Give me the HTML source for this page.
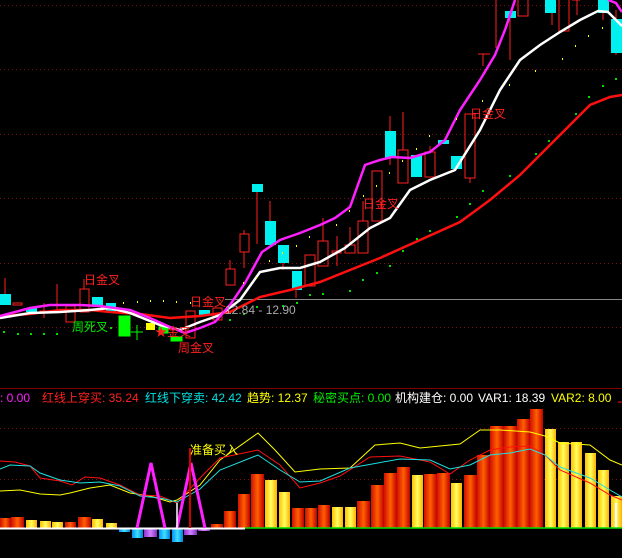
<!DOCTYPE html>
<html><head><meta charset="utf-8"><style>
html,body{margin:0;padding:0;background:#000;width:622px;height:558px;overflow:hidden}
svg{display:block}
text{font-family:"Liberation Sans","Noto Sans CJK SC",sans-serif}
</style></head><body>
<svg width="622" height="558" viewBox="0 0 622 558" xmlns="http://www.w3.org/2000/svg">
<defs>
<linearGradient id="gr" x1="0" x2="1"><stop offset="0" stop-color="#d01000"/><stop offset="0.5" stop-color="#ff6000"/><stop offset="1" stop-color="#c00000"/></linearGradient>
<linearGradient id="gy" x1="0" x2="1"><stop offset="0" stop-color="#ffc000"/><stop offset="0.5" stop-color="#ffff60"/><stop offset="1" stop-color="#ffb000"/></linearGradient>
<linearGradient id="gc" x1="0" x2="1"><stop offset="0" stop-color="#0090ff"/><stop offset="0.5" stop-color="#40e0ff"/><stop offset="1" stop-color="#0080e0"/></linearGradient>
<linearGradient id="gp" x1="0" x2="1"><stop offset="0" stop-color="#9030d0"/><stop offset="0.5" stop-color="#d080ff"/><stop offset="1" stop-color="#8030c0"/></linearGradient>
</defs>
<g stroke="#7a1010" stroke-dasharray="1,3" stroke-width="1">
<line x1="0" y1="5.5" x2="622" y2="5.5"/><line x1="0" y1="69.5" x2="622" y2="69.5"/><line x1="0" y1="134.5" x2="622" y2="134.5"/><line x1="0" y1="198.5" x2="622" y2="198.5"/><line x1="0" y1="263.5" x2="622" y2="263.5"/><line x1="0" y1="327.5" x2="622" y2="327.5"/>
<line x1="0" y1="428.5" x2="622" y2="428.5"/><line x1="0" y1="479.5" x2="622" y2="479.5"/>
</g>
<line x1="225" y1="299.5" x2="622" y2="299.5" stroke="#888"/>
<line x1="0" y1="388.5" x2="622" y2="388.5" stroke="#800000"/>
<!-- candles -->
<g stroke="#ff2020" stroke-width="1" fill="none">
<line x1="5" y1="278" x2="5" y2="294"/>
<rect x="13" y="303" width="9" height="2"/><line x1="44" y1="303" x2="44" y2="318"/><rect x="40" y="311" width="8" height="2"/>
<line x1="57" y1="284" x2="57" y2="310"/>
<rect x="66" y="306" width="9" height="16"/><rect x="80" y="289" width="9" height="23"/><line x1="84" y1="279" x2="84" y2="289"/>
<rect x="186" y="311" width="9" height="27"/><rect x="213" y="308" width="9" height="12"/>
<rect x="226" y="269" width="9" height="16"/><line x1="230" y1="260" x2="230" y2="269"/>
<rect x="240" y="234" width="9" height="18"/><line x1="244" y1="230" x2="244" y2="234"/><line x1="244" y1="252" x2="244" y2="268"/>
<line x1="257" y1="192" x2="257" y2="244"/><line x1="270" y1="201" x2="270" y2="221"/>
<rect x="305" y="255" width="10" height="31"/>
<rect x="318" y="241" width="10" height="25"/><line x1="323" y1="218" x2="323" y2="241"/>
<rect x="332" y="251" width="9" height="2"/><line x1="337" y1="236" x2="337" y2="266"/>
<rect x="345" y="245" width="10" height="8"/><line x1="350" y1="227" x2="350" y2="245"/>
<rect x="358" y="221" width="10" height="32"/><line x1="363" y1="201" x2="363" y2="221"/>
<rect x="372" y="171" width="10" height="50"/>
<rect x="398" y="150" width="10" height="33"/><line x1="403" y1="112" x2="403" y2="150"/>
<rect x="425" y="152" width="10" height="25"/><line x1="430" y1="146" x2="430" y2="152"/>
<rect x="465" y="114" width="10" height="64"/><line x1="470" y1="178" x2="470" y2="183"/>
<line x1="478" y1="54" x2="490" y2="54"/><line x1="483" y1="54" x2="483" y2="66"/>
<line x1="496" y1="0" x2="496" y2="48"/><line x1="510" y1="18" x2="510" y2="60"/>
<rect x="518" y="-1" width="10" height="17"/><rect x="559" y="-1" width="10" height="32"/><line x1="572" y1="0" x2="580" y2="0"/><line x1="577" y1="0" x2="577" y2="15"/>
<line x1="552" y1="13" x2="552" y2="25"/><line x1="603" y1="13" x2="603" y2="20"/><line x1="616" y1="10" x2="616" y2="19"/><line x1="616" y1="53" x2="616" y2="55"/>
<line x1="390" y1="116" x2="390" y2="131"/><line x1="390" y1="158" x2="390" y2="165"/>
<line x1="296" y1="290" x2="296" y2="298"/><line x1="283" y1="263" x2="283" y2="270"/>
</g>
<g fill="#00f0f0">
<rect x="0" y="294" width="11" height="11"/><rect x="26" y="308" width="11" height="4"/><rect x="92" y="297" width="11" height="8"/><rect x="106" y="303" width="10" height="9"/><rect x="199" y="310" width="11" height="6"/>
<rect x="252" y="184" width="11" height="8"/><rect x="265" y="221" width="11" height="24"/><rect x="278" y="245" width="11" height="18"/><rect x="292" y="271" width="10" height="19"/>
<rect x="385" y="131" width="11" height="27"/><rect x="411" y="155" width="11" height="22"/><rect x="438" y="140" width="11" height="4"/><rect x="451" y="156" width="11" height="13"/>
<rect x="505" y="11" width="11" height="7"/><rect x="545" y="0" width="11" height="13"/><rect x="598" y="0" width="11" height="13"/><rect x="611" y="19" width="11" height="34"/>
</g>
<g fill="#00ff00" stroke="#00ff00"><rect x="119" y="316" width="11" height="20"/><line x1="131" y1="332" x2="143" y2="332" fill="none"/><line x1="137" y1="325" x2="137" y2="340" fill="none"/><rect x="171" y="337" width="11" height="4"/><rect x="159" y="327" width="9" height="6"/></g>
<rect x="146" y="323" width="9" height="7" fill="#ffff00"/>
<!-- MA lines -->
<polyline fill="none" stroke="#ff1010" stroke-width="2.5" points="0,316 30,314 60,310 90,310 110,312 140,314 170,318 200,316 230,312 260,297 290,290 320,282 350,270 380,258 420,240 460,222 490,200 520,175 545,150 570,125 590,105 610,97 622,95"/>
<polyline fill="none" stroke="#ffffff" stroke-width="2.5" points="0,318 30,313 60,312 90,310 110,308 130,313 160,325 180,330 200,322 220,315 240,300 260,272 280,268 300,268 320,262 345,248 370,228 390,218 410,190 430,180 455,170 480,130 500,90 520,60 540,45 560,32 580,20 598,11 608,12 622,26"/>
<polyline fill="none" stroke="#ff20ff" stroke-width="2.5" points="0,316 30,308 50,305 80,305 100,306 130,310 150,318 170,327 185,333 200,328 215,322 230,305 245,283 262,252 280,240 300,233 320,225 335,218 350,207 365,165 380,160 392,157 410,158 430,152 445,140 460,110 480,80 495,55 505,30 515,0"/>
<polyline fill="none" stroke="#ff20ff" stroke-width="2.5" points="608,0 616,3 622,12"/>
<!-- dots -->
<g fill="#ffff00"><rect x="123" y="302" width="1" height="2"/><rect x="137" y="301" width="1" height="2"/><rect x="150" y="300" width="1" height="2"/><rect x="163" y="300" width="1" height="2"/><rect x="176" y="301" width="1" height="2"/><rect x="190" y="302" width="1" height="2"/><rect x="243" y="282" width="1" height="2"/><rect x="256" y="277" width="1" height="2"/><rect x="269" y="260" width="1" height="2"/><rect x="282" y="252" width="1" height="2"/><rect x="296" y="245" width="1" height="2"/><rect x="309" y="236" width="1" height="2"/><rect x="336" y="224" width="1" height="2"/><rect x="349" y="210" width="1" height="2"/><rect x="363" y="195" width="1" height="2"/><rect x="376" y="185" width="1" height="2"/><rect x="389" y="172" width="1" height="2"/><rect x="402" y="160" width="1" height="2"/><rect x="416" y="148" width="1" height="2"/><rect x="429" y="135" width="1" height="2"/><rect x="456" y="118" width="1" height="2"/><rect x="482" y="100" width="1" height="2"/><rect x="509" y="84" width="1" height="2"/><rect x="535" y="70" width="1" height="2"/><rect x="562" y="58" width="1" height="2"/><rect x="575" y="45" width="1" height="2"/><rect x="588" y="35" width="1" height="2"/><rect x="602" y="27" width="1" height="2"/></g>
<g fill="#00dd00"><rect x="3" y="331" width="2" height="2"/><rect x="17" y="333" width="2" height="2"/><rect x="30" y="333" width="2" height="2"/><rect x="43" y="333" width="2" height="2"/><rect x="56" y="333" width="2" height="2"/><rect x="110" y="327" width="2" height="2"/><rect x="229" y="319" width="2" height="2"/><rect x="243" y="313" width="2" height="2"/><rect x="256" y="306" width="2" height="2"/><rect x="282" y="305" width="2" height="2"/><rect x="296" y="302" width="2" height="2"/><rect x="309" y="294" width="2" height="2"/><rect x="322" y="293" width="2" height="2"/><rect x="349" y="290" width="2" height="2"/><rect x="362" y="279" width="2" height="2"/><rect x="376" y="272" width="2" height="2"/><rect x="389" y="265" width="2" height="2"/><rect x="402" y="250" width="2" height="2"/><rect x="416" y="238" width="2" height="2"/><rect x="429" y="230" width="2" height="2"/><rect x="456" y="216" width="2" height="2"/><rect x="469" y="203" width="2" height="2"/><rect x="482" y="190" width="2" height="2"/><rect x="509" y="175" width="2" height="2"/><rect x="535" y="153" width="2" height="2"/><rect x="548" y="140" width="2" height="2"/><rect x="575" y="113" width="2" height="2"/><rect x="588" y="96" width="2" height="2"/><rect x="602" y="85" width="2" height="2"/><rect x="615" y="78" width="2" height="2"/></g>
<!-- labels -->
<g font-size="12" fill="#ff2020">
<text x="84" y="284">日金叉</text><text x="363" y="208">日金叉</text><text x="470" y="118">日金叉</text><text x="190" y="306">日金叉</text><text x="178" y="352">周金叉</text><text x="155" y="336">★金叉</text>
</g>
<text x="72" y="331" font-size="12" fill="#00ee00">周死叉</text>
<text x="225" y="314" font-size="12" fill="#aaaaaa">12.84 - 12.90</text>
<!-- header -->
<g font-size="12">
<text x="0" y="402" fill="#ff20ff">: 0.00</text>
<text x="42" y="402" fill="#ff2020">红线上穿买: 35.24</text>
<text x="145" y="402" fill="#00e0e0">红线下穿卖: 42.42</text>
<text x="247" y="402" fill="#ffff00">趋势: 12.37</text>
<text x="313" y="402" fill="#00ee00">秘密买点: 0.00</text>
<text x="395" y="402" fill="#ffffff">机构建仓: 0.00</text>
<text x="478" y="402" fill="#ffffff">VAR1: 18.39</text>
<text x="551" y="402" fill="#ffff00">VAR2: 8.00</text>
<text x="617" y="402" fill="#ff2020">上</text>
</g>
<!-- bars -->
<g>
<rect x="0" y="518" width="11" height="10" fill="url(#gr)"/><rect x="11" y="517" width="13" height="11" fill="url(#gr)"/><rect x="26" y="520" width="11" height="8" fill="url(#gy)"/><rect x="40" y="521" width="11" height="7" fill="url(#gy)"/><rect x="52" y="522" width="11" height="6" fill="url(#gy)"/><rect x="65" y="522" width="11" height="6" fill="url(#gr)"/><rect x="78" y="517" width="13" height="11" fill="url(#gr)"/><rect x="92" y="519" width="11" height="9" fill="url(#gy)"/><rect x="106" y="523" width="11" height="5" fill="url(#gy)"/>
<rect x="119" y="528" width="11" height="4" fill="url(#gc)"/><rect x="132" y="528" width="11" height="10" fill="url(#gc)"/><rect x="144" y="528" width="13" height="9" fill="url(#gp)"/><rect x="159" y="528" width="11" height="11" fill="url(#gc)"/><rect x="172" y="528" width="11" height="14" fill="url(#gc)"/><rect x="184" y="528" width="13" height="7" fill="url(#gp)"/><rect x="198" y="528" width="12" height="3" fill="url(#gp)"/>
<rect x="211" y="524" width="12" height="4" fill="url(#gr)"/><rect x="224" y="511" width="12" height="17" fill="url(#gr)"/><rect x="238" y="494" width="12" height="34" fill="url(#gr)"/><rect x="251" y="474" width="13" height="54" fill="url(#gr)"/><rect x="265" y="480" width="12" height="48" fill="url(#gy)"/><rect x="279" y="492" width="11" height="36" fill="url(#gy)"/><rect x="292" y="508" width="12" height="20" fill="url(#gr)"/><rect x="305" y="508" width="12" height="20" fill="url(#gr)"/><rect x="318" y="505" width="12" height="23" fill="url(#gr)"/><rect x="332" y="507" width="11" height="21" fill="url(#gy)"/><rect x="345" y="507" width="11" height="21" fill="url(#gy)"/><rect x="357" y="501" width="13" height="27" fill="url(#gr)"/><rect x="371" y="485" width="13" height="43" fill="url(#gr)"/><rect x="384" y="473" width="13" height="55" fill="url(#gr)"/><rect x="397" y="467" width="13" height="61" fill="url(#gr)"/><rect x="412" y="475" width="11" height="53" fill="url(#gy)"/><rect x="424" y="474" width="13" height="54" fill="url(#gr)"/><rect x="437" y="473" width="13" height="55" fill="url(#gr)"/><rect x="451" y="483" width="11" height="45" fill="url(#gy)"/><rect x="464" y="475" width="13" height="53" fill="url(#gr)"/><rect x="477" y="455" width="13" height="73" fill="url(#gr)"/><rect x="490" y="426" width="14" height="102" fill="url(#gr)"/><rect x="504" y="426" width="13" height="102" fill="url(#gr)"/><rect x="517" y="419" width="13" height="109" fill="url(#gr)"/><rect x="530" y="409" width="13" height="119" fill="url(#gr)"/><rect x="545" y="429" width="11" height="99" fill="url(#gy)"/><rect x="558" y="442" width="11" height="86" fill="url(#gy)"/><rect x="571" y="442" width="11" height="86" fill="url(#gy)"/><rect x="585" y="453" width="11" height="75" fill="url(#gy)"/><rect x="598" y="470" width="11" height="58" fill="url(#gy)"/><rect x="611" y="496" width="11" height="32" fill="url(#gy)"/>
<rect x="615" y="503" width="2" height="25" fill="#fff"/>
</g>
<line x1="0" y1="528.5" x2="245" y2="528.5" stroke="#fff" stroke-width="2"/>
<line x1="245" y1="528" x2="622" y2="528" stroke="#00e000" stroke-width="1.5"/>
<polyline fill="none" stroke="#ffff00" stroke-width="1" points="0,491 20,490 40,494 60,495 70,493 90,488 110,485 130,493 150,496 170,502 177,500 200,485 220,460 258,433 275,450 295,472 320,469 350,468 375,445 400,443 420,448 440,446 460,444 480,430 500,430 530,432 545,436 560,443 590,445 610,460 622,465"/>
<polyline fill="none" stroke="#ff1010" stroke-width="1" points="0,461 15,462 30,466 40,478 60,481 72,485 85,477 100,478 120,485 140,495 160,496 177,503 200,478 220,458 258,450 280,465 300,488 320,483 340,476 370,457 400,456 430,462 450,474 470,460 490,450 510,447 530,446 545,455 560,470 590,483 610,495 622,500"/>
<polyline fill="none" stroke="#20e0e0" stroke-width="1" points="0,469 10,465 30,466 40,473 60,480 80,483 100,482 120,486 140,496 160,498 177,502 200,489 220,470 258,455 280,470 300,482 320,481 350,468 400,459 430,460 450,469 470,465 490,455 510,453 530,449 545,455 560,467 590,478 610,490 622,497"/>
<polyline fill="none" stroke="#ff20ff" stroke-width="3" points="137,528 151,463 165,528"/>
<polyline fill="none" stroke="#ff20ff" stroke-width="3" points="177,528 191,463 205,528"/>
<line x1="190" y1="448" x2="190" y2="528" stroke="#d00000" stroke-width="2"/>
<line x1="177" y1="503" x2="177" y2="528" stroke="#fff" stroke-width="1.5"/>
<text x="190" y="454" font-size="12" fill="#ffff00">准备买入</text>
</svg>
</body></html>
